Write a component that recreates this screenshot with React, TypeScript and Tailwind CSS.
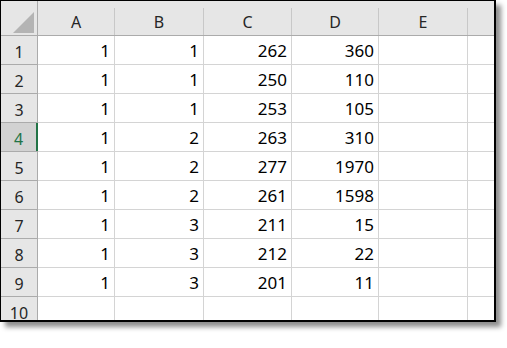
import React from "react";

const cols = [
  { name: "A", w: "w-[77px]" },
  { name: "B", w: "w-[89px]" },
  { name: "C", w: "w-[88px]" },
  { name: "D", w: "w-[87px]" },
  { name: "E", w: "w-[89px]" },
];

const data: (number | null)[][] = [
  [1, 1, 262, 360],
  [1, 1, 250, 110],
  [1, 1, 253, 105],
  [1, 2, 263, 310],
  [1, 2, 277, 1970],
  [1, 2, 261, 1598],
  [1, 3, 211, 15],
  [1, 3, 212, 22],
  [1, 3, 201, 11],
  [null, null, null, null],
];

export default function App() {
  return (
    <div className="w-[507px] h-[348px] bg-white" style={{ fontFamily: '"Noto Sans", "Open Sans", sans-serif' }}>
      <div className="w-[496px] h-[322px] border-l border-t border-r-2 border-b-2 border-black bg-white overflow-hidden shadow-[5px_5px_5px_rgba(0,0,0,0.45)]">
        {/* header */}
        <div className="flex h-[35px] bg-[#e6e6e6] border-b border-[#ababab]">
          <div className="w-[37px] shrink-0 border-r border-[#ababab] flex items-end justify-end pr-[2px] pb-[1px]">
            <svg width="22" height="22" viewBox="0 0 22 22">
              <polygon points="21,0 21,21 0,21" fill="#b4b4b4" />
            </svg>
          </div>
          {cols.map((c) => (
            <div key={c.name} className={`${c.w} shrink-0 flex items-end`}>
              <div className="flex-1 h-full flex items-center justify-center pt-[7px] text-[16px] text-[#262626]">
                {c.name}
              </div>
              <div className="w-px h-[27px] bg-[#c8c8c8]" />
            </div>
          ))}
          <div className="flex-1" />
        </div>
        {data.map((row, i) => {
          const sel = i === 3;
          return (
            <div key={i} className="flex h-[29px]">
              <div
                className={
                  sel
                    ? "w-[37px] shrink-0 bg-[#d2d2d2] border-b border-[#ababab] flex"
                    : "w-[37px] shrink-0 bg-[#e6e6e6] border-b border-[#ababab] border-r border-r-[#ababab] flex"
                }
              >
                <div
                  className={
                    sel
                      ? "flex-1 flex items-center justify-center pt-[3px] text-[16px] text-[#217346]"
                      : "flex-1 flex items-center justify-center pt-[3px] text-[16px] text-[#262626]"
                  }
                >
                  {i + 1}
                </div>
                {sel && <div className="w-[2px] bg-[#217346]" />}
              </div>
              {cols.map((c, j) => (
                <div
                  key={c.name}
                  className={`${c.w} shrink-0 border-r border-b border-[#d4d4d4] flex items-center justify-end pr-[4px] pt-[2px] text-[17px] text-black`}
                >
                  {j < 4 && row[j] !== null ? row[j] : ""}
                </div>
              ))}
              <div className="flex-1 border-b border-[#d4d4d4]" />
            </div>
          );
        })}
      </div>
    </div>
  );
}
